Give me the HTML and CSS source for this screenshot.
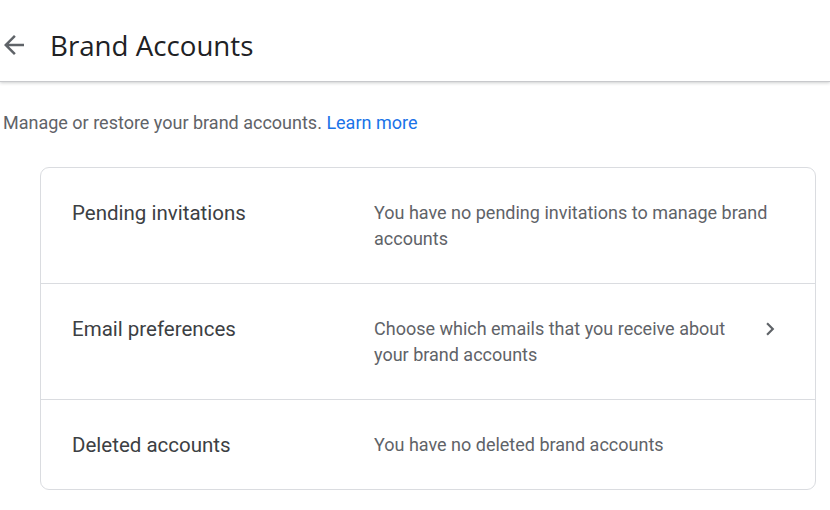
FILE: index.html
```html
<!DOCTYPE html>
<html lang="en">
<head>
    <meta charset="UTF-8">
    <title>Brand Accounts</title>
    <link rel="stylesheet" href="styles.css">
</head>
<body>
    <!-- Top bar -->
    <div class="header">
        <svg class="back" width="30" height="30" viewBox="0 0 24 24">
            <path d="M20 11H7.83l5.59-5.59L12 4l-8 8 8 8 1.41-1.41L7.83 13H20v-2z" fill="#5f6368"/>
        </svg>
        <h1 class="title">Brand Accounts</h1>
    </div>

    <p class="intro">Manage or restore your brand accounts. <a href="#">Learn more</a></p>

    <!-- Settings card -->
    <div class="card">
        <div class="row">
            <div class="label">Pending invitations</div>
            <div class="desc">You have no pending invitations to manage brand accounts</div>
        </div>
        <div class="row">
            <div class="label">Email preferences</div>
            <div class="desc with-chev">Choose which emails that you receive about your brand accounts</div>
            <div class="chev">
                <svg width="26" height="26" viewBox="0 0 24 24">
                    <path d="M10 6L8.59 7.41 13.17 12l-4.58 4.59L10 18l6-6z" fill="#5f6368"/>
                </svg>
            </div>
        </div>
        <div class="row">
            <div class="label">Deleted accounts</div>
            <div class="desc">You have no deleted brand accounts</div>
        </div>
    </div>
</body>
</html>
```

FILE: styles.css
```css
body {
    font-family: Roboto, Arial, sans-serif;
    margin: 0;
    padding: 0;
    background-color: #ffffff;
    color: #3c4043;
}
.header {
    display: flex;
    align-items: center;
    height: 73px;
    padding-top: 8px;
    border-bottom: 1px solid #c8c9cc;
    box-shadow: 0 1px 3px rgba(60, 64, 67, 0.25);
}
.back {
    margin-left: -1px;
}
.title {
    margin: 0 0 0 21px;
    font-family: "Open Sans", Roboto, sans-serif;
    font-weight: 400;
    font-size: 27.7px;
    color: #202124;
}
.intro {
    margin: 29px 0 0 3px;
    font-size: 18px;
    line-height: 24px;
    color: #5f6368;
}
.intro a {
    color: #1a73e8;
    text-decoration: none;
}
.card {
    margin: 32px 14px 0 40px;
    border: 1px solid #dadce0;
    border-radius: 9px;
}
.row {
    display: flex;
    align-items: flex-start;
    padding: 32px 32px 31px 31px;
    border-top: 1px solid #dadce0;
}
.row:first-child {
    border-top: none;
}
.label {
    width: 302px;
    flex-shrink: 0;
    font-size: 20.5px;
    line-height: 26px;
    color: #3c4043;
}
.desc {
    flex: 1;
    font-size: 18px;
    line-height: 26px;
    color: #5f6368;
}
.desc.with-chev {
    padding-right: 16px;
}
.chev {
    width: 26px;
    height: 26px;
    display: flex;
    align-items: center;
}
```
